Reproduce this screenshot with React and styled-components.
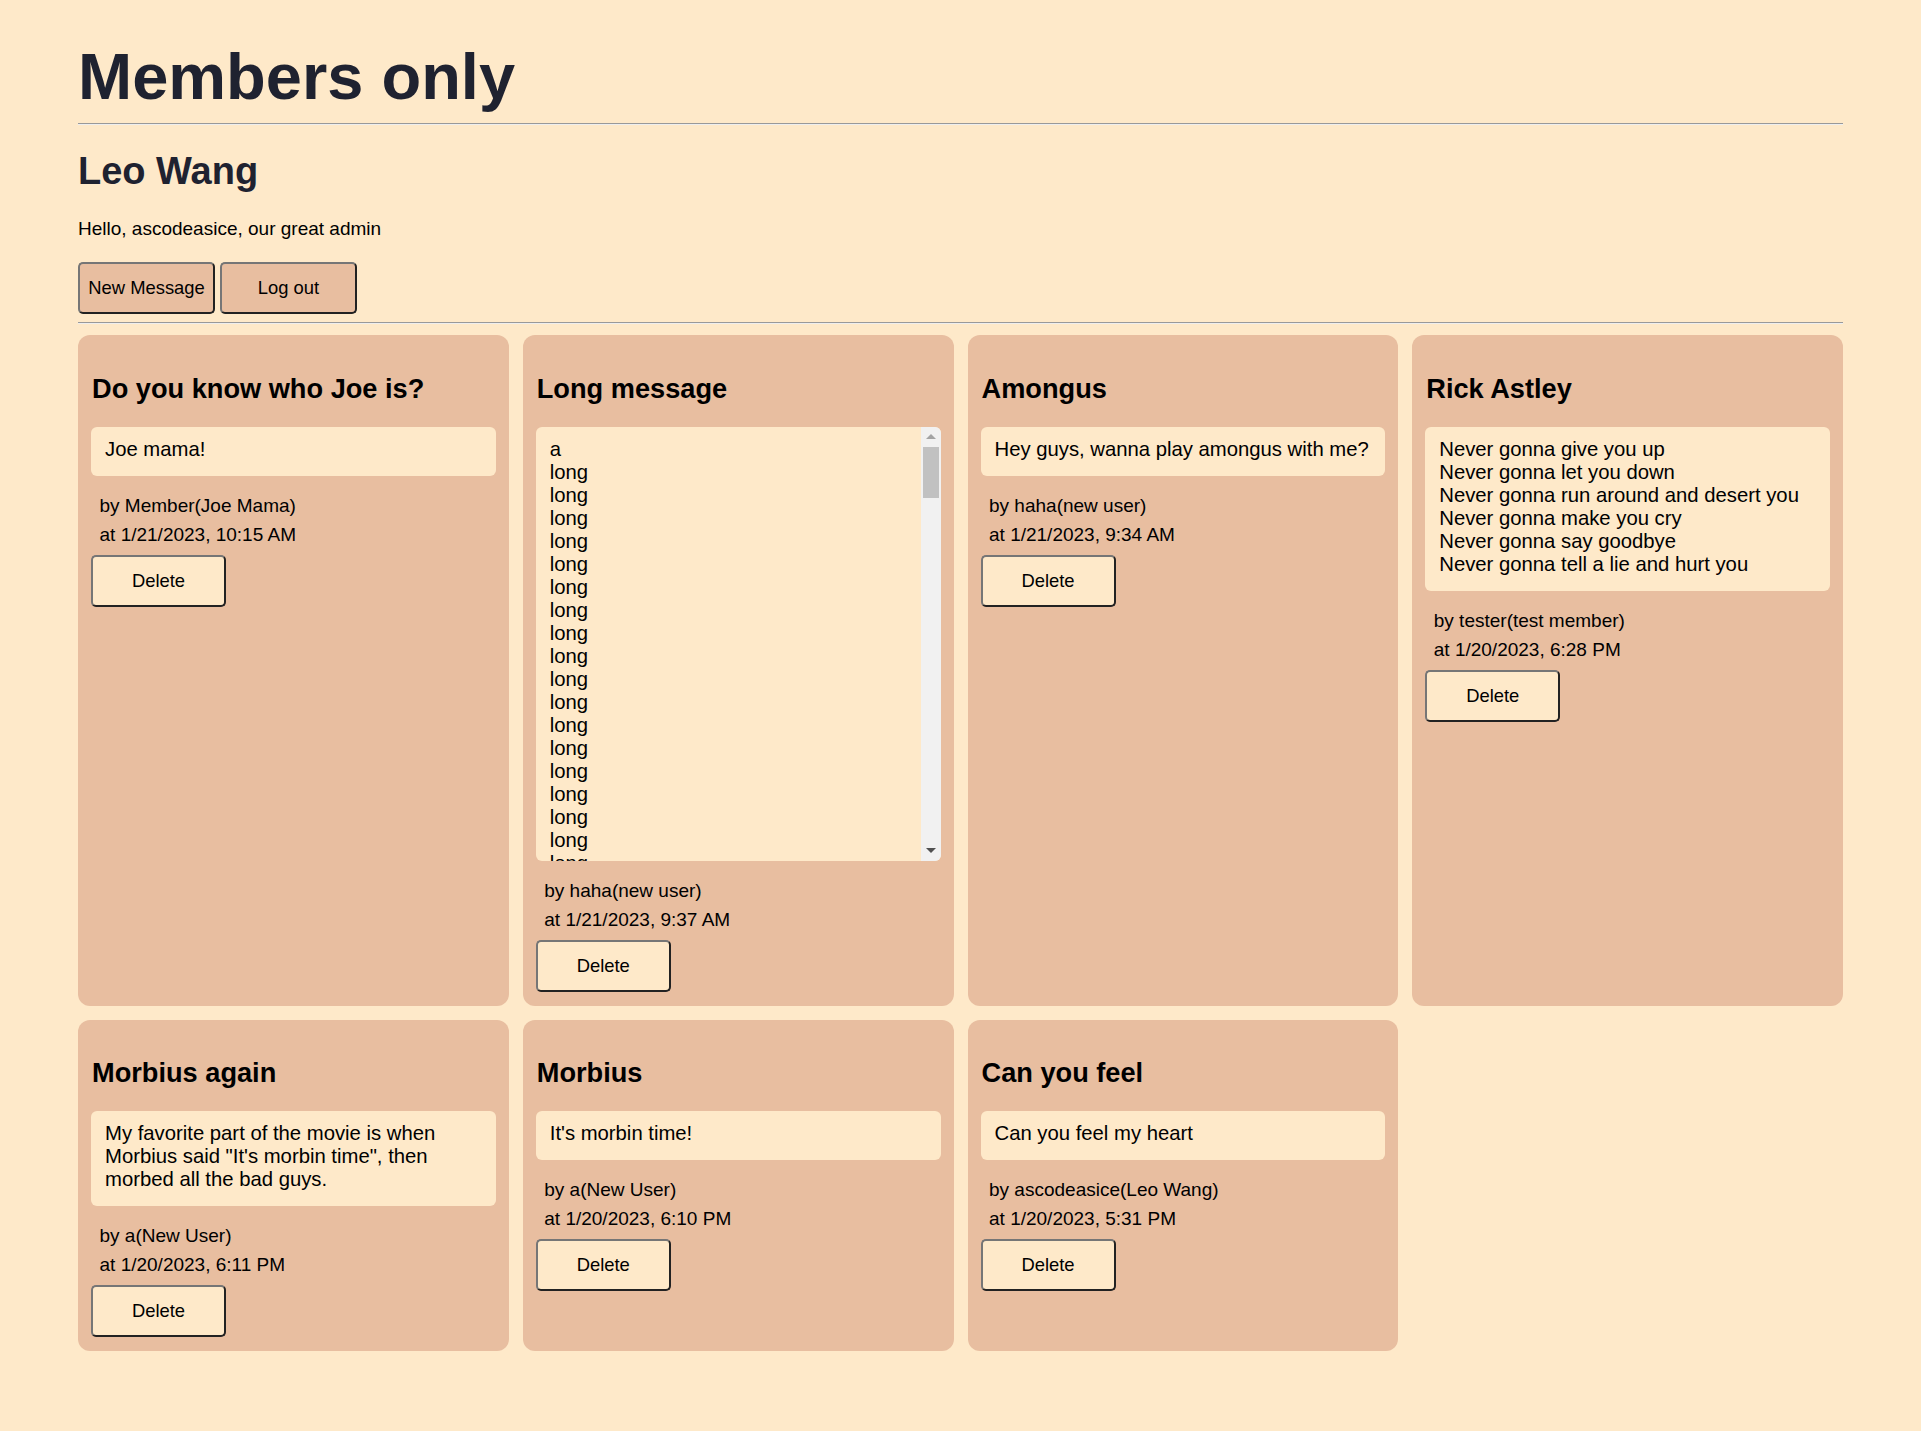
import styled, { createGlobalStyle } from "styled-components";

const GlobalStyle = createGlobalStyle`
  body {
    margin: 0;
    background-color: #fee9c9;
    font-family: "Liberation Sans", Arial, sans-serif;
    color: #000;
  }
`;

const messages = [
  {
    title: "Do you know who Joe is?",
    text: "Joe mama!",
    author: "Member(Joe Mama)",
    date: "1/21/2023, 10:15 AM",
  },
  {
    title: "Long message",
    text: "a\n" + Array(19).fill("long").join("\n"),
    author: "haha(new user)",
    date: "1/21/2023, 9:37 AM",
    long: true,
  },
  {
    title: "Amongus",
    text: "Hey guys, wanna play amongus with me?",
    author: "haha(new user)",
    date: "1/21/2023, 9:34 AM",
  },
  {
    title: "Rick Astley",
    text: "Never gonna give you up\nNever gonna let you down\nNever gonna run around and desert you\nNever gonna make you cry\nNever gonna say goodbye\nNever gonna tell a lie and hurt you",
    author: "tester(test member)",
    date: "1/20/2023, 6:28 PM",
  },
  {
    title: "Morbius again",
    text: 'My favorite part of the movie is when Morbius said "It\'s morbin time", then morbed all the bad guys.',
    author: "a(New User)",
    date: "1/20/2023, 6:11 PM",
  },
  {
    title: "Morbius",
    text: "It's morbin time!",
    author: "a(New User)",
    date: "1/20/2023, 6:10 PM",
  },
  {
    title: "Can you feel",
    text: "Can you feel my heart",
    author: "ascodeasice(Leo Wang)",
    date: "1/20/2023, 5:31 PM",
  },
];

const App = () => {
  return (
    <>
      <GlobalStyle />
      <Page>
        <Title>Members only</Title>
        <Rule />
        <UserName>Leo Wang</UserName>
        <Greeting>Hello, ascodeasice, our great admin</Greeting>
        <Actions>
          <ActionButton>New Message</ActionButton>
          <ActionButton>Log out</ActionButton>
        </Actions>
        <Rule />
        <Board>
          {messages.map((m) => (
            <Card key={m.title}>
              <CardTitle>{m.title}</CardTitle>
              {m.long ? (
                <ScrollBody>
                  <ScrollText>{m.text}</ScrollText>
                  <ScrollTrack>
                    <ArrowButton>
                      <ArrowUp />
                    </ArrowButton>
                    <Thumb />
                    <TrackFill />
                    <ArrowButton>
                      <ArrowDown />
                    </ArrowButton>
                  </ScrollTrack>
                </ScrollBody>
              ) : (
                <Body>{m.text}</Body>
              )}
              <Meta>
                <div>by {m.author}</div>
                <div>at {m.date}</div>
              </Meta>
              <DeleteButton>Delete</DeleteButton>
            </Card>
          ))}
        </Board>
      </Page>
    </>
  );
};

const Page = styled.div`
  padding: 38px 78px 60px;
`;

const Title = styled.h1`
  margin: 0;
  font-size: 65px;
  line-height: 77px;
  color: #1f2230;
`;

const Rule = styled.hr`
  margin: 8px 0;
  border: none;
  border-top: 1px solid #999;
  border-bottom: 1px solid #eee;
`;

const UserName = styled.h2`
  margin: 25px 0 25px;
  font-size: 38px;
  line-height: 43px;
  color: #1f2230;
`;

const Greeting = styled.p`
  margin: 0;
  font-size: 19px;
  line-height: 22px;
`;

const Actions = styled.div`
  display: flex;
  gap: 5px;
  margin: 22px 0 2px;
`;

const buttonBase = `
  font-family: "Liberation Sans", Arial, sans-serif;
  color: #000;
  border: 2px solid;
  border-color: #767676 #222 #222 #767676;
  border-radius: 5px;
  padding: 0;
  height: 52px;
  font-size: 18.4px;
  cursor: pointer;
`;

const ActionButton = styled.button`
  ${buttonBase}
  width: 137px;
  background-color: #e8bea0;
`;

const Board = styled.div`
  display: grid;
  grid-template-columns: repeat(4, 1fr);
  gap: 14px;
  margin-top: 11px;
`;

const Card = styled.div`
  background-color: #e8bea0;
  border-radius: 12px;
  padding: 13px 13px 14px;
  display: flex;
  flex-direction: column;
  align-items: flex-start;
`;

const CardTitle = styled.h3`
  margin: 24.5px 0 23px 1px;
  font-size: 27.2px;
  line-height: 31px;
  font-weight: bold;
`;

const Body = styled.div`
  align-self: stretch;
  box-sizing: border-box;
  background-color: #fee9c9;
  border-radius: 6px;
  padding: 11px 13px 15px 14px;
  font-size: 20.3px;
  line-height: 23px;
  white-space: pre-wrap;
`;

const ScrollBody = styled.div`
  align-self: stretch;
  display: flex;
  height: 434px;
  background-color: #fee9c9;
  border-radius: 6px;
  overflow: hidden;
`;

const ScrollText = styled.div`
  flex: 1;
  padding: 11px 14px 0;
  font-size: 20.3px;
  line-height: 23px;
  white-space: pre-wrap;
  overflow: hidden;
`;

const ScrollTrack = styled.div`
  width: 20px;
  display: flex;
  flex-direction: column;
  background-color: #f1f1f1;
`;

const ArrowButton = styled.div`
  height: 20px;
  display: flex;
  align-items: center;
  justify-content: center;
`;

const ArrowUp = styled.div`
  width: 0;
  height: 0;
  border-left: 5px solid transparent;
  border-right: 5px solid transparent;
  border-bottom: 5px solid #a3a3a3;
`;

const ArrowDown = styled.div`
  width: 0;
  height: 0;
  border-left: 5px solid transparent;
  border-right: 5px solid transparent;
  border-top: 5px solid #505050;
`;

const Thumb = styled.div`
  height: 51px;
  margin: 0 2px;
  background-color: #c1c1c1;
`;

const TrackFill = styled.div`
  flex: 1;
`;

const Meta = styled.div`
  margin-top: 15px;
  padding: 0 8.5px;
  font-size: 19px;
  line-height: 29px;
`;

const DeleteButton = styled.button`
  ${buttonBase}
  width: 135px;
  margin-top: 6px;
  background-color: #fee9c9;
`;

export default App;
